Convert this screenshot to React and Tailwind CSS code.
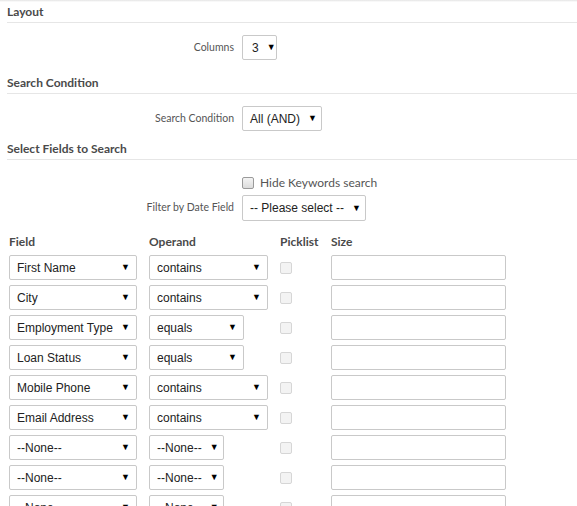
import React from "react";

const rows = [
  { field: "First Name", op: "contains", opW: "w-[119px]" },
  { field: "City", op: "contains", opW: "w-[119px]" },
  { field: "Employment Type", op: "equals", opW: "w-[95px]" },
  { field: "Loan Status", op: "equals", opW: "w-[95px]" },
  { field: "Mobile Phone", op: "contains", opW: "w-[119px]" },
  { field: "Email Address", op: "contains", opW: "w-[119px]" },
  { field: "--None--", op: "--None--", opW: "w-[75px]" },
  { field: "--None--", op: "--None--", opW: "w-[75px]" },
  { field: "--None--", op: "--None--", opW: "w-[75px]" },
];

// fake select box, looks like the old native one
const Select = ({ value, className = "" }) => (
  <div
    className={`h-[25px] flex items-center justify-between pl-[7px] pr-[6px] border border-[#c9c9c9] rounded-[2px] bg-white text-[12px] text-[#222] font-['Liberation_Sans',Arial,sans-serif] ${className}`}
  >
    <span className="whitespace-nowrap">{value}</span>
    <span className="text-[9px] text-black leading-none ml-2">▼</span>
  </div>
);

const Heading = ({ children, className = "" }) => (
  <div
    className={`h-[21px] ml-[7px] flex items-center border-b border-[#e6e6e6] text-[12px] font-bold text-[#4a4a4a] ${className}`}
  >
    {children}
  </div>
);

const FormRow = ({ label, children, className = "" }) => (
  <div className={`flex items-center ${className}`}>
    <div className="w-[234px] text-right text-[10.5px] text-[#555]">{label}</div>
    <div className="ml-[8px]">{children}</div>
  </div>
);

const DisabledBox = () => (
  <div className="w-[12px] h-[12px] border border-[#d6d6d6] rounded-[2px] bg-[#f3f3f3]" />
);

export default function App() {
  return (
    <div className="w-[577px] h-[506px] overflow-hidden bg-white font-['Lato','Open_Sans',sans-serif]">
      {/* top shadow */}
      <div className="h-[2px] bg-gradient-to-b from-[#e4e4e4] to-white" />

      <Heading>Layout</Heading>
      <FormRow label="Columns" className="mt-[12px]">
        <Select value="3" className="w-[35px] pl-[9px]" />
      </FormRow>

      <Heading className="mt-[13px]">Search Condition</Heading>
      <FormRow label="Search Condition" className="mt-[12px]">
        <Select value="All (AND)" className="w-[80px]" />
      </FormRow>

      <Heading className="mt-[8px]">Select Fields to Search</Heading>

      <div className="mt-[14px] ml-[242px] flex items-center">
        <div className="w-[12px] h-[12px] border border-[#9a9a9a] rounded-[2px] bg-gradient-to-b from-[#f4f4f4] to-[#dcdcdc]" />
        <span className="ml-[6px] text-[12px] text-[#555]">Hide Keywords search</span>
      </div>

      <FormRow label="Filter by Date Field" className="mt-[3px]">
        <Select value="-- Please select --" className="w-[124px] h-[26px]" />
      </FormRow>

      <div className="mt-[12px] pl-[9px]">
        <div className="grid grid-cols-[140px_131px_51px_1fr] text-[12px] font-bold text-[#4a4a4a] h-[14px] items-center">
          <div>Field</div>
          <div>Operand</div>
          <div>Picklist</div>
          <div>Size</div>
        </div>
        <div className="mt-[8px] flex flex-col gap-[5px]">
          {rows.map((r, i) => (
            <div key={i} className="grid grid-cols-[140px_131px_51px_1fr] items-center">
              <Select value={r.field} className="w-[128px]" />
              <Select value={r.op} className={r.opW} />
              <DisabledBox />
              <div className="w-[175px] h-[25px] border border-[#c9c9c9] rounded-[2px] bg-white" />
            </div>
          ))}
        </div>
      </div>
    </div>
  );
}
